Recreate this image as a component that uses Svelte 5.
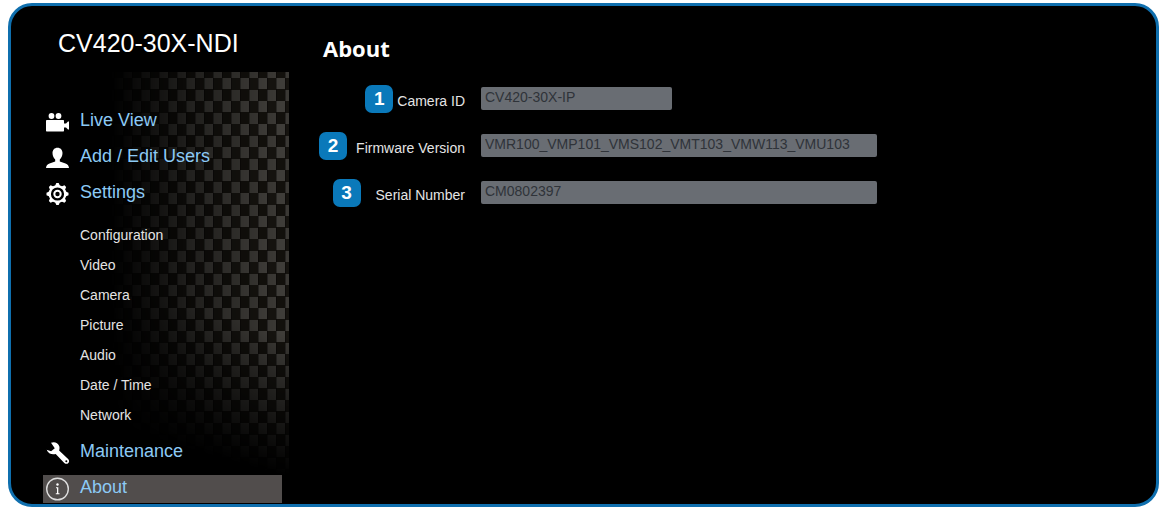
<script>
  const settingsLinks = ['Configuration', 'Video', 'Camera', 'Picture', 'Audio', 'Date / Time', 'Network'];

  const menu = [
    { icon: 'video', label: 'Live View' },
    { icon: 'user', label: 'Add / Edit Users' },
    { icon: 'gear', label: 'Settings', children: settingsLinks },
    { icon: 'wrench', label: 'Maintenance' },
    { icon: 'info', label: 'About' }
  ];

  // gap = distance between the callout and its label
  const fields = [
    { id: 'camera-id', label: 'Camera ID', value: 'CV420-30X-IP', short: true, gap: 4 },
    { id: 'firmware', label: 'Firmware Version', value: 'VMR100_VMP101_VMS102_VMT103_VMW113_VMU103', gap: 9 },
    { id: 'serial', label: 'Serial Number', value: 'CM0802397', gap: 15 }
  ];

  let active = $state('About');

  const teeth = [0, 45, 90, 135, 180, 225, 270, 315];
</script>

<div class="panel">
  <aside class="sidebar">
    <div class="model">CV420-30X-NDI</div>
    <nav>
      <ul class="menu">
        {#each menu as item}
          <li>
            <a
              class="item"
              class:active={active === item.label}
              href="#{item.icon}"
              onclick={() => (active = item.label)}
            >
              <svg class="icon" viewBox="0 0 24 24" aria-hidden="true">
                {#if item.icon === 'video'}
                  <circle cx="5.5" cy="6" r="2.9" />
                  <circle cx="12.5" cy="6" r="2.9" />
                  <rect x="0" y="10" width="18" height="11.5" rx="0.7" />
                  <path d="M17 13.5h3L22 11.500h1v8h-1L20 17.500h-3z" />
                {:else if item.icon === 'user'}
                  <path d="M11.500 1.800c-3 0-5 2.200-5 5.300 0 2.700 1.200 5 2.700 6.300v2L3.500 17.600C1.200 18.500.2 19.800 0 22h23c-.2-2.200-1.200-3.500-3.500-4.400l-5.700-2.200v-2c1.500-1.300 2.700-3.600 2.700-6.300 0-3.100-2-5.300-5-5.300z" />
                {:else if item.icon === 'gear'}
                  <circle class="line" cx="11.5" cy="12" r="7.8" />
                  <circle class="line ring" cx="11.5" cy="12" r="3.2" />
                  {#each teeth as angle}
                    <path d="M8.800 4.500L10.300 1h2.400L14.200 4.500z" transform="rotate({angle} 11.5 12)" />
                  {/each}
                {:else if item.icon === 'wrench'}
                  <path d="M5 1.800C8 .3 12 1.500 13.200 5c.5 1.600.4 3-.1 4.500l9 8.500c2.800 2.800-.8 6.600-3.800 3.900l-8.600-8.900c-3.700 1.100-7.600-.3-9-4.300l4.400 1.600 3.700-3z" />
                  <circle class="hole" cx="20.3" cy="20.2" r="1" />
                {:else}
                  <circle class="line thin" cx="11.5" cy="12" r="10.8" />
                  <circle cx="11.5" cy="7.5" r="1.2" />
                  <path d="M10 10.300h2.300v6h1.200v1h-3.700v-1h1.200v-5H10z" />
                {/if}
              </svg>
              <span class="item-label">{item.label}</span>
            </a>
            {#if item.children}
              <ul class="submenu">
                {#each item.children as child}
                  <li><a href="#settings">{child}</a></li>
                {/each}
              </ul>
            {/if}
          </li>
        {/each}
      </ul>
    </nav>
  </aside>

  <main>
    <h1>About</h1>
    <form>
      {#each fields as field, i}
        <div class="row">
          <div class="caption">
            <span class="callout" style="margin-right: {field.gap}px">{i + 1}</span>
            <label for={field.id}>{field.label}</label>
          </div>
          <input id={field.id} class:short={field.short} type="text" value={field.value} readonly />
        </div>
      {/each}
    </form>
  </main>
</div>

<style>
  :global(body) {
    background: #fff;
  }

  .panel {
    display: flex;
    box-sizing: border-box;
    margin: 3px 10px 0 8px;
    border: 3px solid #0f6fae;
    border-radius: 24px;
    background: #000;
    color: #e4e4e4;
    font-family: 'Liberation Sans', Arial, sans-serif;
    overflow: hidden;
  }

  .sidebar {
    flex: 0 0 278px;
  }

  .model {
    padding: 22px 0 14px 47px;
    color: #fff;
    font-size: 25px;
    line-height: 30px;
  }

  nav {
    position: relative;
    padding: 36px 7px 1px 32px;
  }

  /* woven carbon texture, fading out to the left and the bottom */
  nav::before {
    content: '';
    position: absolute;
    inset: 0;
    background:
      linear-gradient(90deg, rgba(0, 0, 0, 0.35) 1px, transparent 1px) 4px 6px / 9px 23px,
      conic-gradient(#3f3d39 25%, #12100c 0 50%, #3a3834 0 75%, #15130f 0) 4px 6px / 18px 23px;
    mask-image:
      linear-gradient(90deg, transparent 36%, rgba(0, 0, 0, 0.5) 62%, #000 95%),
      linear-gradient(15deg, transparent 20%, #000 48%);
    mask-composite: intersect;
  }

  ul {
    list-style: none;
    margin: 0;
    padding: 0;
  }

  .menu {
    position: relative;
    display: flex;
    flex-direction: column;
    gap: 8px;
  }

  a {
    color: inherit;
    text-decoration: none;
  }

  .item {
    display: flex;
    align-items: center;
    gap: 10px;
    height: 28px;
    padding-left: 3px;
    color: #8ccaf5;
    font-size: 18px;
  }

  .item.active {
    background: #514d4c;
  }

  .item-label {
    padding-bottom: 4px;
    line-height: 20px;
  }

  .icon {
    width: 24px;
    height: 24px;
    fill: #fff;
  }

  .line {
    fill: none;
    stroke: #fff;
    stroke-width: 2.4;
  }

  .ring {
    stroke-width: 2;
  }

  .thin {
    stroke: #ddd;
    stroke-width: 1.4;
  }

  .hole {
    fill: #000;
  }

  .submenu {
    padding: 12px 0 1px 37px;
    font-size: 14px;
    line-height: 30px;
  }

  main {
    flex: 1;
    padding: 27px 34px;
  }

  h1 {
    margin: 0 0 24px;
    color: #fff;
    font-family: 'Open Sans', sans-serif;
    font-size: 22px;
    font-weight: 700;
    line-height: 30px;
  }

  form {
    display: flex;
    flex-direction: column;
    gap: 24px;
  }

  .row {
    display: flex;
    gap: 16px;
  }

  .caption {
    display: flex;
    justify-content: flex-end;
    align-items: center;
    width: 142px;
    height: 23px;
    font-size: 14px;
    white-space: nowrap;
  }

  label {
    padding-top: 4px;
  }

  .callout {
    flex: none;
    width: 28px;
    border-radius: 7px;
    background: #0a79ba;
    color: #fff;
    font-size: 19px;
    font-weight: 700;
    line-height: 28px;
    text-align: center;
  }

  input {
    box-sizing: border-box;
    width: 396px;
    height: 23px;
    padding: 0 4px 3px;
    border: 0;
    border-radius: 2px;
    outline: none;
    background: #696d73;
    color: #2f3339;
    font: 14px 'Liberation Sans', Arial, sans-serif;
  }

  .short {
    width: 191px;
  }
</style>
